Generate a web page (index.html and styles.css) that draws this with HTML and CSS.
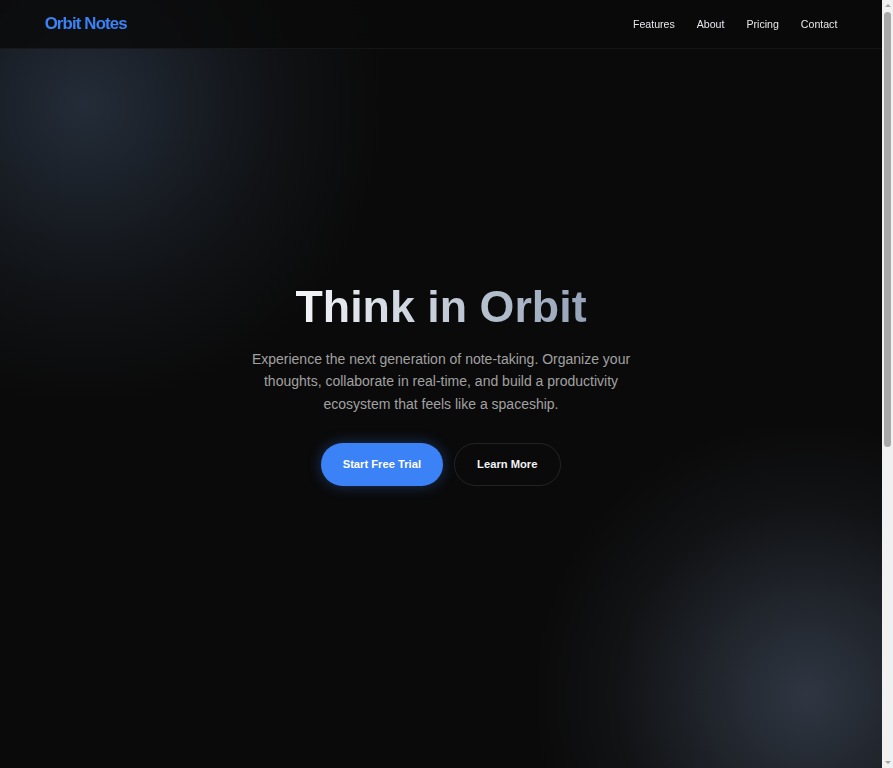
FILE: index.html
```html
<!DOCTYPE html>
<html lang="en">
<head>
<meta charset="utf-8">
<title>Orbit Notes</title>
<link rel="stylesheet" href="styles.css">
</head>
<body>
<header class="nav">
  <a class="logo" href="#">Orbit Notes</a>
  <nav class="nav-links">
    <a href="#">Features</a>
    <a href="#">About</a>
    <a href="#">Pricing</a>
    <a href="#">Contact</a>
  </nav>
</header>
<main>
  <section class="hero">
    <h1 class="hero-title">Think in Orbit</h1>
    <p class="hero-text">Experience the next generation of note-taking. Organize your thoughts, collaborate in real-time, and build a productivity ecosystem that feels like a spaceship.</p>
    <div class="hero-actions">
      <a class="btn btn-primary" href="#">Start Free Trial</a>
      <a class="btn btn-ghost" href="#">Learn More</a>
    </div>
  </section>
</main>
<div class="scrollbar" aria-hidden="true">
  <span class="scroll-arrow up"></span>
  <span class="scroll-thumb"></span>
  <span class="scroll-space"></span>
  <span class="scroll-arrow down"></span>
</div>
</body>
</html>
```
FILE: styles.css
```css
* { box-sizing: border-box; }

html { background: #0a0a0a; }

body {
  margin: 0;
  padding-right: 11px;
  background: #0a0a0a;
  color: #e5e7eb;
  font-family: "Liberation Sans", Arial, sans-serif;
}

a { text-decoration: none; color: inherit; }

.nav {
  position: fixed;
  top: 0;
  left: 0;
  right: 11px;
  z-index: 10;
  height: 49px;
  padding: 0 5%;
  display: flex;
  align-items: center;
  justify-content: space-between;
  background: rgba(10, 10, 10, 0.82);
  backdrop-filter: blur(10px);
  border-bottom: 1px solid rgba(255, 255, 255, 0.05);
}

.logo {
  font-size: 16.8px;
  font-weight: 700;
  letter-spacing: -0.05em;
  color: #3b82f6;
}

.nav-links {
  display: flex;
  gap: 22px;
}

.nav-links a {
  font-size: 10.6px;
  color: #e5e7eb;
}

.hero {
  min-height: 768px;
  padding: 0 5%;
  display: flex;
  flex-direction: column;
  align-items: center;
  justify-content: center;
  text-align: center;
  background:
    radial-gradient(circle at 85px 105px, rgba(51, 65, 85, 0.62) 0, rgba(51, 65, 85, 0.4) 90px, rgba(51, 65, 85, 0.14) 195px, rgba(51, 65, 85, 0) 300px),
    radial-gradient(circle at calc(100% - 75px) 695px, rgba(60, 70, 86, 0.74) 0, rgba(60, 70, 86, 0.45) 95px, rgba(60, 70, 86, 0.14) 190px, rgba(60, 70, 86, 0) 275px),
    #0a0a0a;
}

.hero-title {
  display: inline-block;
  margin: 0 0 16.8px;
  font-size: 44.8px;
  line-height: 1.1;
  font-weight: 700;
  background: linear-gradient(90deg, #f5f6f8 0%, #94a3b8 100%);
  -webkit-background-clip: text;
  background-clip: text;
  color: transparent;
}

.hero-text {
  max-width: 420px;
  margin: 0 0 28px;
  font-size: 14px;
  line-height: 1.6;
  color: #a1a1a1;
}

.hero-actions {
  display: flex;
  gap: 11.2px;
}

.btn {
  display: inline-block;
  padding: 14px 22.4px;
  border-radius: 999px;
  font-size: 11.2px;
  font-weight: 700;
  line-height: 13px;
  border: 1px solid transparent;
}

.btn-primary {
  padding: 14px 20.5px;
  background: #3b82f6;
  color: #ffffff;
  box-shadow: 0 0 14px rgba(59, 130, 246, 0.35);
}

.btn-ghost {
  background: transparent;
  color: #f3f4f6;
  border-color: rgba(255, 255, 255, 0.1);
}

/* static picture of the browser scrollbar seen in the reference */
.scrollbar {
  position: fixed;
  top: 0;
  right: 0;
  bottom: 0;
  width: 11px;
  z-index: 20;
  background: #f1f1f1;
  display: flex;
  flex-direction: column;
  align-items: center;
  padding: 4px 0;
}

.scroll-arrow {
  width: 0;
  height: 0;
  border-left: 3px solid transparent;
  border-right: 3px solid transparent;
}

.scroll-arrow.up { border-bottom: 3px solid #a3a3a3; }
.scroll-arrow.down { border-top: 3px solid #a3a3a3; }

.scroll-thumb {
  margin-top: 5px;
  width: 7px;
  height: 435px;
  border-radius: 4px;
  background: #a8a8a8;
}

.scroll-space { flex: 1; }
```
